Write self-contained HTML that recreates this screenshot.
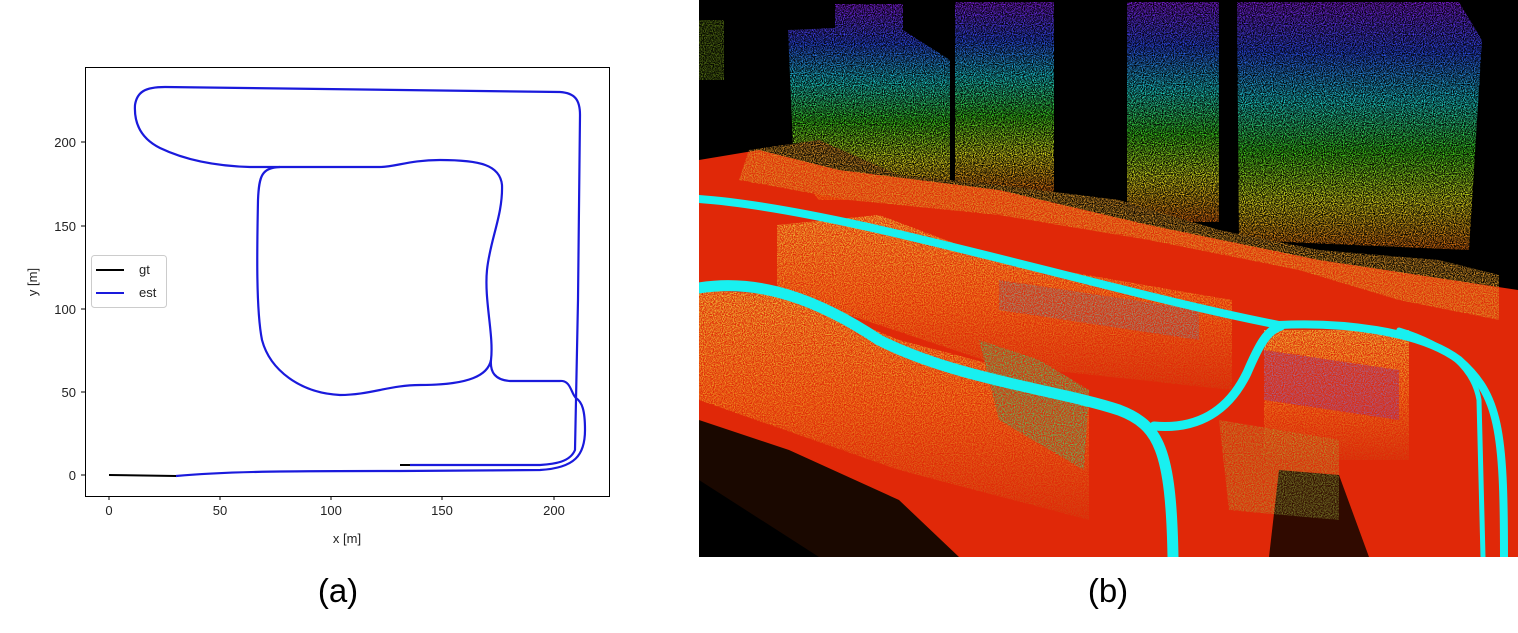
<!DOCTYPE html>
<html><head><style>
html,body{margin:0;padding:0;background:#fff;width:1518px;height:633px;overflow:hidden}
svg{display:block}
</style></head><body>
<svg width="1518" height="633" viewBox="0 0 1518 633" xmlns="http://www.w3.org/2000/svg" font-family="Liberation Sans, sans-serif">
<defs>
<linearGradient id="tw" x1="0" y1="0" x2="0" y2="1">
<stop offset="0" stop-color="#8a20f0"/>
<stop offset="0.2" stop-color="#3050ff"/>
<stop offset="0.4" stop-color="#20e0e0"/>
<stop offset="0.6" stop-color="#40e020"/>
<stop offset="0.8" stop-color="#f0f020"/>
<stop offset="1" stop-color="#f07010"/>
</linearGradient>
<linearGradient id="low" x1="0" y1="0" x2="0" y2="1">
<stop offset="0" stop-color="#f0d040"/>
<stop offset="0.5" stop-color="#f09020"/>
<stop offset="1" stop-color="#d04010"/>
</linearGradient>
<filter id="spk"><feTurbulence type="fractalNoise" baseFrequency="0.9" numOctaves="1" result="n"/>
<feColorMatrix in="n" type="matrix" values="0 0 0 0 0 0 0 0 0 0 0 0 0 0 0 0 0 0 -2.5 1.85" result="m"/>
<feComposite in="SourceGraphic" in2="m" operator="out"/></filter>
</defs>

<rect x="85.5" y="67.5" width="524" height="429" fill="#fff" stroke="#000" stroke-width="1"/>
<g stroke="#000" stroke-width="1">
<line x1="109" y1="496" x2="109" y2="500"/><line x1="220" y1="496" x2="220" y2="500"/>
<line x1="331" y1="496" x2="331" y2="500"/><line x1="442" y1="496" x2="442" y2="500"/>
<line x1="554" y1="496" x2="554" y2="500"/>
<line x1="81" y1="475" x2="85" y2="475"/><line x1="81" y1="392" x2="85" y2="392"/>
<line x1="81" y1="309" x2="85" y2="309"/><line x1="81" y1="226" x2="85" y2="226"/>
<line x1="81" y1="142" x2="85" y2="142"/>
</g>
<g font-size="13" fill="#222" text-anchor="middle">
<text x="109" y="515">0</text><text x="220" y="515">50</text><text x="331" y="515">100</text>
<text x="442" y="515">150</text><text x="554" y="515">200</text>
<text x="347" y="543">x [m]</text>
</g>
<g font-size="13" fill="#222" text-anchor="end">
<text x="76" y="480">0</text><text x="76" y="397">50</text><text x="76" y="314">100</text>
<text x="76" y="231">150</text><text x="76" y="147">200</text>
</g>
<text x="37" y="282" font-size="13" fill="#222" text-anchor="middle" transform="rotate(-90 37 282)">y [m]</text>

<path d="M109 475 L176 476" stroke="#000" stroke-width="2" fill="none"/>
<path d="M400 465 L412 465" stroke="#000" stroke-width="2" fill="none"/>
<path d="M176 476 C230 471 300 471 400 471 L540 470 C575 468 585 455 585 430 C585 410 582 402 576 398 C571 394 571 380 560 381 L510 381 C495 380 490 372 491 360 C494 335 484 300 487 270 C490 240 503 215 502 185 C500 165 480 160 440 160 C410 160 395 167 380 167 L250 167 C215 166 185 160 160 148 C140 138 134 122 135 105 C137 92 145 87 165 87 L560 92 C575 93 580 100 580 115 L578 300 L575 450 C570 462 555 464 540 465 L410 465" stroke="#1a1adc" stroke-width="2.2" fill="none"/>
<path d="M491 360 C488 375 470 385 420 385 C390 385 370 395 340 395 C300 393 270 370 262 340 C256 310 257 250 258 200 C259 175 262 168 280 167" stroke="#1a1adc" stroke-width="2.2" fill="none"/>

<rect x="91.5" y="255.5" width="75" height="52" rx="3" fill="#fff" stroke="#ccc"/>
<line x1="96" y1="270" x2="124" y2="270" stroke="#000" stroke-width="2"/>
<line x1="96" y1="293" x2="124" y2="293" stroke="#1a1adc" stroke-width="2"/>
<text x="139" y="274" font-size="13" fill="#222">gt</text>
<text x="139" y="297" font-size="13" fill="#222">est</text>

<text x="338" y="602" font-size="33" fill="#000" text-anchor="middle">(a)</text>
<text x="1108" y="602" font-size="33" fill="#000" text-anchor="middle">(b)</text>

<svg x="699" y="0" width="819" height="557" viewBox="0 0 819 557">
<rect width="819" height="557" fill="#000"/>
<path d="M0 160 L60 150 L140 170 L300 190 L450 225 L620 260 L819 290 L819 557 L0 557 Z" fill="#e02808"/>
<path d="M0 420 L90 450 L200 500 L260 557 L0 557 Z" fill="#1a0800"/>
<path d="M0 480 L120 557 L0 557 Z" fill="#000"/>
<path d="M580 470 L640 475 L670 557 L570 557 Z" fill="#300a00"/>
<g filter="url(#spk)">
<path d="M89 30 L136 28 L136 4 L204 4 L204 30 L251 60 L251 200 L120 200 L95 170 Z" fill="url(#tw)"/>
<rect x="256" y="2" width="99" height="190" fill="url(#tw)"/>
<rect x="428" y="2" width="92" height="220" fill="url(#tw)"/>
<path d="M538 2 L760 2 L783 40 L770 250 L540 240 Z" fill="url(#tw)"/>
<path d="M50 150 L120 140 L200 175 L300 185 L420 200 L520 230 L620 250 L740 260 L800 275 L800 320 L700 300 L600 270 L450 240 L300 215 L150 200 L40 180 Z" fill="#e09828"/>
<path d="M78 225 L180 215 L300 260 L533 300 L533 390 L300 365 L150 315 L78 305 Z" fill="url(#low)"/>
<path d="M0 290 L90 295 L200 340 L390 390 L390 520 L200 470 L0 400 Z" fill="url(#low)"/>
<rect x="565" y="330" width="145" height="130" fill="url(#low)"/>
<path d="M280 340 L340 360 L390 390 L385 470 L300 420 Z" fill="#60c060"/>
<path d="M565 350 L700 370 L700 420 L565 400 Z" fill="#8050c0" opacity="0.7"/>
<path d="M300 280 L500 310 L500 340 L300 310 Z" fill="#70a0a0" opacity="0.7"/>
<path d="M520 420 L640 440 L640 520 L530 510 Z" fill="#a0c040" opacity="0.6"/>
<rect x="0" y="20" width="25" height="60" fill="#90c020" opacity="0.6"/>
</g>
<g fill="none" stroke="#18f0f0" stroke-linecap="round">
<path d="M0 199 C150 210 400 290 580 325 C640 322 720 330 760 360 C800 395 805 430 805 557" stroke-width="8"/>
<path d="M0 288 C60 278 120 300 180 340 C260 380 360 390 420 410 C460 425 472 450 474 557" stroke-width="11"/>
<path d="M455 426 C500 430 530 410 548 373 C560 345 568 330 582 326" stroke-width="9"/>
<path d="M700 330 C750 345 775 370 780 400 L784 557" stroke-width="5"/>
</g>
</svg>
</svg>
</body></html>
